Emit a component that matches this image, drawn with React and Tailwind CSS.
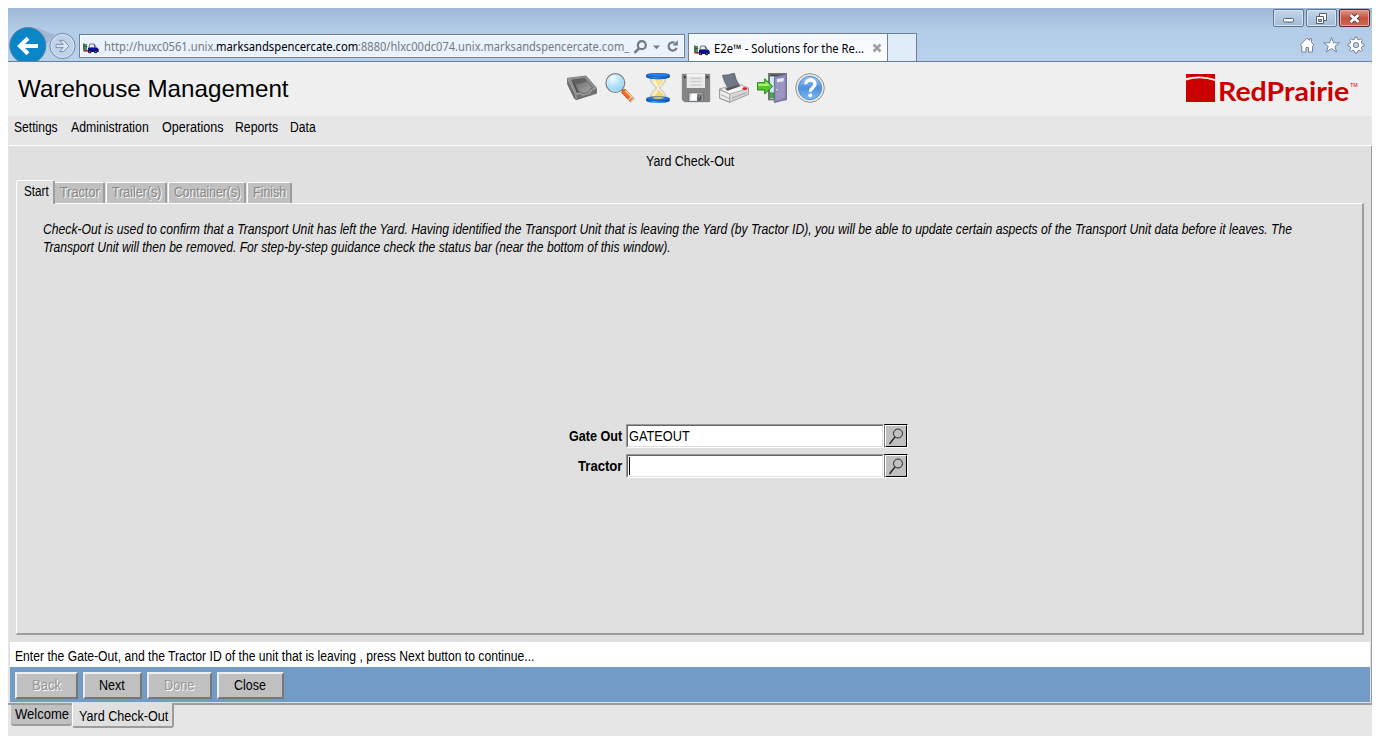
import { useLayoutEffect, useRef, useState } from 'react';

// Condenses or widens a run of text so that it fills exactly `w` pixels.
function Fit({ w, children, className = '' }) {
  const ref = useRef(null);
  const [scale, setScale] = useState(1);
  useLayoutEffect(() => {
    const natural = ref.current.offsetWidth;
    if (natural) setScale(w / natural);
  }, [w, children]);
  return (
    <span className="block shrink-0 overflow-visible whitespace-pre" style={{ width: w }}>
      <span ref={ref} className={`inline-block origin-left ${className}`} style={{ transform: `scaleX(${scale})` }}>
        {children}
      </span>
    </span>
  );
}

const Truck = () => (
  <svg width="16" height="12" viewBox="0 0 48 36" className="shrink-0">
    <path d="M1 6h11v18H1z" fill="#4b9558" />
    <path d="M1 4h3v22H1zM1 13h12v2H1z" fill="#3b4440" />
    <path d="M18 17l2-11h14l6 11z" fill="#e6edf5" stroke="#77778c" strokeWidth="3" />
    <path d="M33 8l4 9" stroke="#4c4c6c" strokeWidth="3" />
    <path d="M15 17h28l4 5v8H15z" fill="#0b0b9c" />
    <path d="M2 24h13v5H2z" fill="#a1333c" />
    <circle cx="20" cy="29" r="5" fill="#141430" />
    <circle cx="38" cy="29" r="5" fill="#141430" />
    <path d="M18 28h3v3h-3zM37 28h3v3h-3z" fill="#a7a7b7" />
  </svg>
);

function Chrome() {
  return (
    <div className="flex h-[54px] flex-col border-b border-[#67809f] bg-linear-to-b from-[#9db8d5] via-[#b3cce8] via-40% to-[#b9d1ea]">
      <div className="flex h-[19px] shrink-0 items-end justify-end gap-[2px] pr-[2px]">
        <div className="flex h-[18px] w-[31px] items-center justify-center rounded-[2px] border border-[#5d7693] bg-linear-to-b from-[#c3d6eb] to-[#a2bbd6] shadow-[inset_0_0_0_1px_#d7e4f1]">
          <svg width="13" height="6" className="mt-[3px]"><rect x="1.5" y="1.5" width="10" height="3.500" rx="1" fill="#fff" stroke="#55606f" /></svg>
        </div>
        <div className="flex h-[18px] w-[31px] items-center justify-center rounded-[2px] border border-[#5d7693] bg-linear-to-b from-[#c3d6eb] to-[#a2bbd6] shadow-[inset_0_0_0_1px_#d7e4f1]">
          <svg width="13" height="13"><path d="M4.5 1.5h7v7h-7z" fill="#fff" stroke="#55606f" /><path d="M1.5 4.5h7v7h-7z" fill="#fff" stroke="#55606f" /><path d="M3.5 7.500h3v2h-3z" fill="#afc4dc" stroke="#55606f" /></svg>
        </div>
        <div className="flex h-[18px] w-[31px] items-center justify-center rounded-[2px] border border-[#5c2226] bg-linear-to-b from-[#dc9b8c] via-[#c4513e] via-50% to-[#c76b55] shadow-[inset_0_0_0_1px_#e3aa9e]">
          <svg width="13" height="11" viewBox="0 0 13 11"><path d="M2.500 2l8 7M10.500 2l-8 7" stroke="#59464d" strokeWidth="4.600" /><path d="M2.500 2l8 7M10.500 2l-8 7" stroke="#fff" strokeWidth="2.700" /></svg>
        </div>
      </div>
      <div className="flex h-[34px] shrink-0 items-end">
        <svg width="71" height="34" viewBox="0 0 71 34" className="shrink-0">
          <path d="M22 0c14 1 13 5 25 7l-8 10z" fill="#a3b7d2" />
          <circle cx="54.500" cy="19" r="12.600" fill="#bfd2e9" stroke="#7087a5" />
          <circle cx="54.500" cy="19" r="11.400" fill="none" stroke="#d7e4f2" />
          <path d="M48 17.400h7.300l-3.800-4h4l5.600 5.600-5.600 5.600h-4l3.800-4H48z" fill="#dbe7f5" stroke="#7b92b0" />
          <circle cx="19.800" cy="18.600" r="18" fill="#0a86c8" stroke="#567a9f" />
          <path d="M30 19H12.500M20 11.200l-8 7.800 8 7.800" fill="none" stroke="#fff" strokeWidth="4" />
        </svg>
        <div className="mb-[3px] flex h-6 w-[606px] shrink-0 items-center border border-[#6e7f96] bg-[#eaf2fb] pl-[3px] font-['Noto_Sans','Open_Sans',sans-serif] text-[12px] leading-6 text-[#747a82] shadow-[inset_0_0_0_1px_#fafdff]">
          <div className="pt-[4px]"><Truck /></div>
          <div className="ml-[5px] flex pt-[2px]">
            <Fit w={112}>http://huxc0561.unix.</Fit>
            <Fit w={142} className="text-black">marksandspencercate.com</Fit>
            <Fit w={271}>:8880/hlxc00dc074.unix.marksandspencercate.com_</Fit>
          </div>
          <svg width="50" height="16" viewBox="0 0 50 16" className="mt-[2px] ml-[4px] shrink-0">
            <circle cx="8.800" cy="6.200" r="4" fill="none" stroke="#737a83" strokeWidth="2.200" />
            <path d="M6 9.300l-4.500 4.500" stroke="#737a83" strokeWidth="2.500" />
            <path d="M20 6.500h7l-3.500 3.800z" fill="#737a83" />
            <path d="M43.600 8.800a4.100 4.100 0 1 1-2-5" fill="none" stroke="#737a83" strokeWidth="2.200" />
            <path d="M39.500 6.500h5.300V1.200z" fill="#737a83" />
          </svg>
        </div>
        <div className="ml-[3px] flex h-[28px] w-[200px] shrink-0 items-center border border-b-0 border-[#6e7f96] bg-linear-to-b from-[#f3f8fd] to-[#fdfeff] pl-[5px] font-['Noto_Sans','Open_Sans',sans-serif] text-[12px] leading-6 text-black">
          <div className="pt-[5px]"><Truck /></div>
          <div className="ml-[4px] pt-[2px]"><Fit w={150}>E2e™ - Solutions for the Re...</Fit></div>
          <svg width="10" height="10" viewBox="0 0 10 10" className="ml-[8px]"><path d="M1.500 1.500l7 7M8.500 1.500l-7 7" stroke="#9a9fa6" strokeWidth="2.500" /></svg>
        </div>
        <div className="h-[28px] w-[29px] shrink-0 border border-b-0 border-l-0 border-[#6e7f96] bg-[#e0edf9]" />
        <svg width="66" height="18" viewBox="0 0 66 18" className="mb-[7px] mr-[7px] ml-auto shrink-0">
          <path d="M1.200 9L8 2.200l2.500 2.300V2.700h2v3.800L15 9l-1.500 1.200V16h-4v-4.500H7V16H2.800v-5.800z" fill="#fff" stroke="#75849a" />
          <path d="M32.500 1.500l2 5.300h5.800l-4.500 3.500 1.800 5.700-5.100-3.500-5.100 3.500 1.800-5.700-4.500-3.500h5.800z" fill="#fff" stroke="#75849a" />
          <path d="M56 1.200h2l.5 2 1.600.7 2-1.300 1.400 1.400-1.200 2 .7 1.600 2 .6v1.800l-2 .6-.7 1.600 1.200 2-1.400 1.400-2-1.300-1.600.7-.5 2h-2l-.5-2-1.600-.7-2 1.300-1.400-1.400 1.200-2-.7-1.600-2-.6V8.200l2-.6.7-1.600-1.200-2 1.400-1.400 2 1.300 1.600-.7z" fill="#fff" stroke="#75849a" />
          <circle cx="57" cy="9.100" r="2.700" fill="#bcd1ea" stroke="#75849a" />
        </svg>
      </div>
    </div>
  );
}

function ToolIcons() {
  const svg = { width: 30, height: 30, viewBox: '0 0 90 90', className: 'shrink-0' };
  return (
    <div className="flex gap-2">
      <svg {...svg}>
        <defs><linearGradient id="tray" x2="1" y2="1"><stop stopColor="#5d5d5d" /><stop offset="1" stopColor="#adadad" /></linearGradient></defs>
        <path d="M1 16L57 9 89 46V61L28 80 22 76 1 32z" fill="#717171" stroke="#555" strokeWidth="2" strokeLinejoin="round" />
        <path d="M2 16L57 10 88 46 74 50 69 61 47 67 39 61 27 65z" fill="#929292" />
        <path d="M14 21L54 16 77 45 70 48 65 57 48 62 40 56 30 58z" fill="url(#tray)" stroke="#555" strokeWidth="2" />
        <path d="M14 21L54 16 57 27 24 34z" fill="#616161" />
        <path d="M14 21l10 13 12 23-6 2z" fill="#505050" />
        <path d="M2 18l24 47 2 13M27 65l12-4 8 6 22-6 5-11 14-4" fill="none" stroke="#b4b4b4" strokeWidth="2" />
      </svg>
      <svg {...svg}>
        <defs><radialGradient id="lens" cx=".35" cy=".25" r=".8"><stop stopColor="#f3ffff" /><stop offset=".5" stopColor="#b6e5f8" /><stop offset="1" stopColor="#8bcdf1" /></radialGradient></defs>
        <path d="M49 48l11 10" stroke="#888" strokeWidth="9" />
        <circle cx="31" cy="30" r="28" fill="url(#lens)" stroke="#787f86" strokeWidth="4" />
        <circle cx="31" cy="30" r="25" fill="none" stroke="#dce5e9" strokeWidth="2" />
        <path d="M54 53l29 30" stroke="#b94b12" strokeWidth="16" />
        <path d="M55 54l26 26" stroke="#ff6824" strokeWidth="12" />
        <path d="M61 53l21 21" stroke="#ffd08a" strokeWidth="4" />
        <path d="M71 81l12-13M77 87l12-13" stroke="#d9d9ce" strokeWidth="4" />
      </svg>
      <svg {...svg}>
        <defs><linearGradient id="cap"><stop stopColor="#0645aa" /><stop offset=".35" stopColor="#3aa9ff" /><stop offset="1" stopColor="#0045bb" /></linearGradient></defs>
        <path d="M22 13h46c0 15-10 23-19 32 9 8 19 16 19 32H22c0-17 9-24 19-32-10-8-19-16-19-32z" fill="#f3eee0" stroke="#b5b5ae" strokeWidth="3" />
        <path d="M27 18h36c-3 9-11 18-18 24-8-6-16-15-18-24z" fill="#f7e189" />
        <path d="M45 51c10 6 17 13 19 23H26c2-10 9-17 19-23z" fill="#f4d66c" />
        <path d="M33 22l10 18M31 69l12-14" stroke="#fff9da" strokeWidth="4" />
        <path d="M10 7v5c5 9 65 9 70 0V7z" fill="#124da9" />
        <path d="M10 7v4c6 7 64 7 70 0V7z" fill="url(#cap)" />
        <ellipse cx="45" cy="6.500" rx="35" ry="5.500" fill="#2580ec" stroke="#0b4fb9" strokeWidth="2" />
        <path d="M10 77v7c6 8 63 8 70 0v-7z" fill="url(#cap)" />
        <ellipse cx="45" cy="77" rx="35" ry="6" fill="#2376d8" stroke="#0c4cab" strokeWidth="2" />
        <path d="M27 75c10-5 26-5 37 0-9 4-28 4-37 0z" fill="#e2bb53" />
      </svg>
      <svg {...svg}>
        <path d="M4 4h82v82H10l-6-6z" fill="#858585" stroke="#666" strokeWidth="2" />
        <path d="M17 4h55v41H17z" fill="#e9e9e9" />
        <path d="M17 4h55v4H17z" fill="#fff" />
        <path d="M28 16h33M28 26h33M28 36h33" stroke="#c3c3c3" strokeWidth="3" />
        <path d="M76 9h6v7h-6zM9 9h5v7H9z" fill="#333" />
        <path d="M20 58h50v28H20z" fill="#777" />
        <path d="M25 61h39v23H25z" fill="#d8dde0" />
        <path d="M33 62h14v20H28z" fill="#fff" />
        <path d="M50 63h12v20H48z" fill="#4a5055" />
        <path d="M53 62h9L52 81z" fill="#808990" />
      </svg>
      <svg {...svg}>
        <path d="M2 48L60 33 89 46V64L32 88 2 76z" fill="#d6d6d6" stroke="#777" strokeWidth="2" />
        <path d="M2 48L60 33 89 46 32 63z" fill="#f7f7f7" stroke="#999" strokeWidth="2" />
        <path d="M17 47L58 35 66 39 26 53z" fill="#555" />
        <path d="M10 7Q28 7 46 0Q50 20 60 36L27 45Q15 27 10 7z" fill="#6e7985" stroke="#4e5965" strokeWidth="2" />
        <path d="M2 50l30 13v24L2 75z" fill="#eee" stroke="#888" strokeWidth="2" />
        <path d="M39 76l43-17M6 65l25 12" stroke="#a8a8a8" strokeWidth="3" />
        <ellipse cx="77" cy="47" rx="7" ry="4" fill="#e71818" />
      </svg>
      <svg {...svg}>
        <path d="M33 0h56v82H33z" fill="#747474" />
        <path d="M39 5h44v72H39z" fill="#3d474a" />
        <path d="M39 10h19v67H39z" fill="#cdeef8" />
        <path d="M39 58h18v17H39z" fill="#4ba345" />
        <path d="M52 11L88 2v77L52 89z" fill="#8b86b5" stroke="#5d597f" strokeWidth="2" />
        <path d="M56 17l27-6v63l-27 8z" fill="#aaa5cb" opacity=".5" />
        <path d="M60 18l20-3v10l-20 3z" fill="#e8edff" />
        <circle cx="60" cy="50" r="4" fill="#ddd" stroke="#555" />
        <path d="M1 29h22V17l24 23-24 23V51H1z" fill="#56c530" stroke="#22851c" strokeWidth="3" />
        <path d="M4 32h22v-7l14 14H4z" fill="#a8ef6e" />
      </svg>
      <svg {...svg}>
        <defs><linearGradient id="help" x2="0" y2="1"><stop stopColor="#9bc9f5" /><stop offset=".5" stopColor="#4f91dd" /><stop offset="1" stopColor="#79bcf9" /></linearGradient></defs>
        <circle cx="45" cy="45" r="43" fill="#e8e8e8" stroke="#929292" strokeWidth="3" />
        <circle cx="45" cy="45" r="35" fill="url(#help)" stroke="#5d8fc6" strokeWidth="3" />
        <path d="M32 34c0-16 27-18 28-2 1 12-14 12-14 24" fill="none" stroke="#fff" strokeWidth="10" />
        <circle cx="46" cy="67" r="6" fill="#fff" />
      </svg>
    </div>
  );
}

const menus = [['Settings', 44, 'ml-[6px]'], ['Administration', 78, 'ml-[13px]'], ['Operations', 61, 'ml-[13px]'], ['Reports', 43, 'ml-[12px]'], ['Data', 26, 'ml-[12px]']];

function LockedTab({ label, w, className }) {
  return (
    <div className={`h-[21px] shrink-0 rounded-t-[2px] border-t border-r-2 border-l border-t-white border-r-[#9c9c9c] border-l-white bg-[#c0c0c0] pl-[5px] leading-[19px] text-[#868686] [text-shadow:1px_1px_0_#fff] ${className}`}>
      <Fit w={w}>{label}</Fit>
    </div>
  );
}

function Field({ label, w, value, caret }) {
  return (
    <div className="flex h-[24px] items-center">
      <div className="mr-[4px] flex w-[54px] justify-end font-bold leading-6"><Fit w={w}>{label}</Fit></div>
      <div className="flex h-[24px] w-[258px] items-center border border-t-[#999] border-r-white border-b-white border-l-[#999] bg-white">
        <div className="flex h-[22px] w-full items-center border border-t-[#666] border-r-[#e0e0e0] border-b-[#e0e0e0] border-l-[#666] pl-px leading-5">
          {value && <Fit w={61}>{value}</Fit>}
          {caret && <div className="h-[18px] w-px bg-black" />}
        </div>
      </div>
      <div className="flex h-[24px] w-[24px] border border-t-black border-r-white border-b-white border-l-[#777]">
        <div className="flex h-[22px] w-[22px] items-center justify-center border border-t-white border-r-black border-b-black border-l-white bg-[#c0c0c0]">
          <svg width="16" height="18" viewBox="0 0 16 18" className="shrink-0"><circle cx="10" cy="6.500" r="4.500" fill="none" stroke="#222" /><path d="M7 10l-4 5-1.500 2" fill="none" stroke="#222" strokeWidth="1.300" /></svg>
        </div>
      </div>
    </div>
  );
}

function Btn({ label, w, className, disabled }) {
  return (
    <div className={`flex h-[27px] shrink-0 items-center justify-center border-2 border-t-[#eee] border-r-[#777] border-b-[#777] border-l-[#eee] bg-[#c0c0c0] pr-px leading-[21px] ${disabled ? 'text-[#969696] [text-shadow:1px_1px_0_#fff]' : ''} ${className}`}>
      <Fit w={w}>{label}</Fit>
    </div>
  );
}

export default function App() {
  return (
    <div className="h-[744px] w-[1380px] overflow-hidden bg-white p-2 font-['Liberation_Sans',Arial,sans-serif] text-[14px] text-black">
      <div className="flex h-[728px] w-[1364px] flex-col bg-[#e6e6e6]">
        <Chrome />
        <header className="flex h-[54px] shrink-0 items-center bg-[#efefef] pl-[10px]">
          <div className="w-[549px] text-[24px] leading-[54px]"><Fit w={271}>Warehouse Management</Fit></div>
          <div className="pb-[2px]"><ToolIcons /></div>
          <div className="mr-[14px] ml-auto flex items-start text-[#cb0000]">
            <svg width="30" height="31" viewBox="0 0 30 31" className="mr-[2px]"><path d="M0 3h29v5Q15 3.500 0 7z" fill="#cb0000" /><path d="M0 9.500Q15 5 29 10v21H0z" fill="#cb0000" /></svg>
            <div className="pt-[3px] font-['Lato',sans-serif] text-[27px] leading-[34px] font-bold"><Fit w={131}>RedPrairie</Fit></div>
            <div className="pt-[10px] pl-px text-[6px] leading-[8px]"><Fit w={8}>TM</Fit></div>
          </div>
        </header>
        <nav className="flex h-[29px] shrink-0 pt-px leading-[21px]">
          {menus.map(([t, w, m]) => <div key={t} className={m}><Fit w={w}>{t}</Fit></div>)}
        </nav>
        <main className="ml-px flex h-[558px] shrink-0 flex-col border-t border-r border-t-white border-r-[#9c9c9c] bg-[#e0e0e0]">
          <div className="flex h-[34px] shrink-0 pl-[637px] leading-[30px]"><Fit w={88}>Yard Check-Out</Fit></div>
          <div className="z-10 -mb-px flex h-[24px] shrink-0 items-end pl-[7px]">
            <div className="z-10 h-[24px] w-[39px] rounded-t-[3px] border-t border-r-2 border-l border-t-white border-r-[#9c9c9c] border-l-white bg-[#e0e0e0] pl-[7px] leading-[21px]"><Fit w={25}>Start</Fit></div>
            <div className="-ml-px flex h-[22px] items-start gap-px">
              <LockedTab label="Tractor" w={40} className="w-[51px]" />
              <LockedTab label="Trailer(s)" w={49} className="w-[61px]" />
              <LockedTab label="Container(s)" w={67} className="w-[78px]" />
              <LockedTab label="Finish" w={33} className="w-[45px]" />
            </div>
          </div>
          <section className="mr-[7px] ml-[7px] flex h-[432px] shrink-0 flex-col border-t border-r-2 border-b-2 border-l border-t-white border-r-[#9c9c9c] border-b-[#9c9c9c] border-l-white">
            <div className="pt-[16px] pl-[26px] leading-[18px] italic">
              <Fit w={1249}>Check-Out is used to confirm that a Transport Unit has left the Yard. Having identified the Transport Unit that is leaving the Yard (by Tractor ID), you will be able to update certain aspects of the Transport Unit data before it leaves. The</Fit>
              <Fit w={628}>Transport Unit will then be removed. For step-by-step guidance check the status bar (near the bottom of this window).</Fit>
            </div>
            <div className="mt-[168px] ml-[551px] flex flex-col gap-[6px]">
              <Field label="Gate Out" w={53} value="GATEOUT" />
              <Field label="Tractor" w={44} caret />
            </div>
          </section>
          <div className="mt-[7px] mr-px ml-px h-[25px] shrink-0 bg-white pl-[5px] leading-[28px]"><Fit w={519}>Enter the Gate-Out, and the Tractor ID of the unit that is leaving , press Next button to continue...</Fit></div>
          <div className="mr-px ml-px flex h-[35px] shrink-0 items-start bg-[#729bc8] pt-[5px] pl-[5px]">
            <Btn label="Back" w={29} disabled className="w-[63px]" />
            <Btn label="Next" w={26} className="ml-[5px] w-[59px]" />
            <Btn label="Done" w={30} disabled className="ml-[5px] w-[65px]" />
            <Btn label="Close" w={32} className="ml-[5px] w-[67px]" />
          </div>
        </main>
        <footer className="flex h-[33px] shrink-0 items-start">
          <div className="h-[2px] w-[3px] bg-[#9c9c9c]" />
          <div className="h-[23px] w-[61px] rounded-b-[3px] border-t-2 border-b-2 border-[#9c9c9c] bg-[#c0c0c0] pl-[4px] leading-[19px]"><Fit w={54}>Welcome</Fit></div>
          <div className="h-[25px] w-[102px] rounded-b-[3px] border-r-2 border-b-2 border-l border-r-[#9c9c9c] border-b-[#9c9c9c] border-l-white bg-[#e0e0e0] pl-[6px] leading-[26px]"><Fit w={89}>Yard Check-Out</Fit></div>
          <div className="h-[2px] grow bg-[#9c9c9c]" />
        </footer>
      </div>
    </div>
  );
}
